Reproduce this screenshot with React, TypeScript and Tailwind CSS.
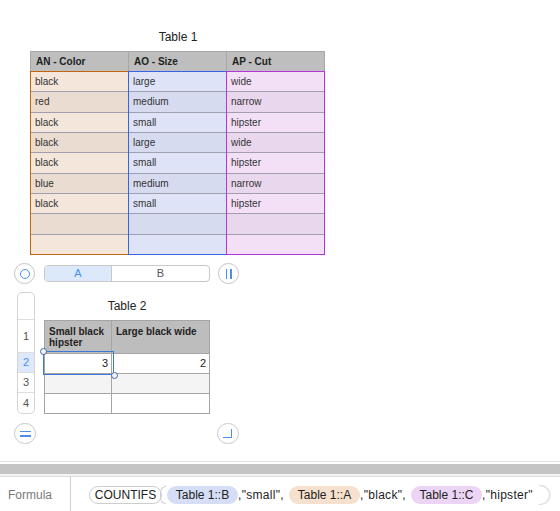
import React from 'react';

type Row = [string, string, string];

const ROWS: Row[] = [
  ['black', 'large', 'wide'],
  ['red', 'medium', 'narrow'],
  ['black', 'small', 'hipster'],
  ['black', 'large', 'wide'],
  ['black', 'small', 'hipster'],
  ['blue', 'medium', 'narrow'],
  ['black', 'small', 'hipster'],
  ['', '', ''],
  ['', '', ''],
];

const COLS = [
  { title: 'AN - Color', border: 'border-[#c2650f]', light: 'bg-[#f4e6da]', dark: 'bg-[#eadcd0]' },
  { title: 'AO - Size', border: 'border-[#3a62e4]', light: 'bg-[#dfe3f8]', dark: 'bg-[#d6dbef]' },
  { title: 'AP - Cut', border: 'border-[#b436d6]', light: 'bg-[#f3e0f7]', dark: 'bg-[#e9d7ed]' },
];

function Table1() {
  return (
    <div className="ml-[30px] w-[296px]">
      <div className="text-center text-[12px] leading-[14px] text-[#222] mb-[7px]">Table 1</div>
      <div className="flex">
        {COLS.map((col, ci) => (
          <div key={col.title} className={`flex flex-col w-[99px] ${ci === 0 ? '' : '-ml-px'}`}>
            <div
              className={`h-[20px] bg-[#bdbebd] border-t border-l border-[#a7a7a7] flex items-center pl-[5px] text-[10px] font-bold text-[#222] ${
                ci === 2 ? 'border-r' : ''
              }`}
            >
              {col.title}
            </div>
            <div className={`h-[184px] border ${col.border} flex flex-col`}>
              {ROWS.map((r, ri) => (
                <div
                  key={ri}
                  className={`flex-1 flex items-center pl-[4px] text-[10px] text-[#333] ${ri % 2 === 0 ? col.light : col.dark} ${
                    ri > 0 ? 'border-t border-[#a09fae]' : ''
                  }`}
                >
                  {r[ci]}
                </div>
              ))}
            </div>
          </div>
        ))}
      </div>
    </div>
  );
}

function Circle({ children }: { children: React.ReactNode }) {
  return (
    <div className="w-[21px] h-[21px] rounded-full border border-[#c9c9c9] bg-white flex items-center justify-center shadow-[0_0_1px_rgba(0,0,0,0.08)]">
      {children}
    </div>
  );
}

function ColumnControls() {
  return (
    <div className="flex items-center mt-[8px] ml-[14px] h-[21px]">
      <Circle>
        <div className="w-[10px] h-[10px] rounded-full border-[1.5px] border-[#4a90e8]" />
      </Circle>
      <div className="ml-[9px] w-[166px] h-[17px] rounded-[4px] border border-[#c8c8c8] flex overflow-hidden text-[11px]">
        <div className="w-[67px] bg-[#dce9fb] border-r border-[#c8c8c8] flex items-center justify-center text-[#4a8ee8]">A</div>
        <div className="flex-1 flex items-center justify-center text-[#555]">B</div>
      </div>
      <div className="ml-[8px]">
        <Circle>
          <div className="flex gap-[3px]">
            <div className="w-[1.5px] h-[10px] bg-[#4a90e8]" />
            <div className="w-[1.5px] h-[10px] bg-[#4a90e8]" />
          </div>
        </Circle>
      </div>
    </div>
  );
}

function Table2Area() {
  return (
    <div className="flex mt-[8px] ml-[17px]">
      <div className="w-[18px] h-[122px] border border-[#d4d4d4] rounded-[5px] flex flex-col overflow-hidden text-[11px] text-[#555] bg-white">
        <div className="h-[27px] border-b border-[#dedede]" />
        <div className="h-[33px] border-b border-[#dedede] flex items-center justify-center">1</div>
        <div className="h-[20px] border-b border-[#dedede] flex items-center justify-center bg-[#dde9fb] text-[#4a8ee8]">2</div>
        <div className="h-[20px] border-b border-[#dedede] flex items-center justify-center">3</div>
        <div className="flex-1 flex items-center justify-center">4</div>
      </div>
      <div className="ml-[9px] w-[166px] flex flex-col">
        <div className="h-[28px] flex items-center justify-center text-[12px] text-[#222]">Table 2</div>
        <div className="relative border border-[#a5a5a5]">
          <div className="flex h-[33px] bg-[#bdbdbd] border-b border-[#a5a5a5] text-[10px] font-bold text-[#222] leading-[11px]">
            <div className="w-[67px] border-r border-[#a5a5a5] pl-[4px] pt-[5px]">Small black hipster</div>
            <div className="flex-1 pl-[4px] pt-[5px]">Large black wide</div>
          </div>
          <div className="flex h-[20px] border-b border-[#a5a5a5] text-[11px] text-[#222]">
            <div className="w-[67px] border-r border-[#a5a5a5] flex items-center justify-end pr-[3px]">3</div>
            <div className="flex-1 flex items-center justify-end pr-[3px]">2</div>
          </div>
          <div className="flex h-[20px] border-b border-[#a5a5a5] bg-[#f4f4f4]">
            <div className="w-[67px] border-r border-[#a5a5a5]" />
            <div className="flex-1" />
          </div>
          <div className="flex h-[19px]">
            <div className="w-[67px] border-r border-[#a5a5a5]" />
            <div className="flex-1" />
          </div>
          <div className="absolute left-[-2px] top-[30px] w-[71px] h-[24px] border border-[#3b78d8] pointer-events-none" />
          <div className="absolute left-[-5px] top-[27px] w-[7px] h-[7px] rounded-full bg-[#eef2fb] border border-[#4a66a8]" />
          <div className="absolute left-[66px] top-[51px] w-[7px] h-[7px] rounded-full bg-[#eef2fb] border border-[#4a66a8]" />
        </div>
      </div>
    </div>
  );
}

function BottomControls() {
  return (
    <div className="flex items-center mt-[9px] ml-[14px]">
      <div className="w-[22px] h-[21px] rounded-full border border-[#c9c9c9] bg-white flex flex-col items-center justify-center gap-[3px]">
        <div className="w-[11px] h-[1.5px] bg-[#4a90e8]" />
        <div className="w-[11px] h-[1.5px] bg-[#4a90e8]" />
      </div>
      <div className="ml-[181px] w-[22px] h-[21px] rounded-full border border-[#c9c9c9] bg-white flex items-center justify-center">
        <div className="w-[9px] h-[9px] border-r-[1.5px] border-b-[1.5px] border-[#4a90e8] -mt-[1px] -ml-[1px]" />
      </div>
    </div>
  );
}

function Pill({ label, bg }: { label: string; bg: string }) {
  return (
    <div className={`w-[71px] h-[18px] rounded-full ${bg} flex items-center justify-center text-[12px] text-[#222] tracking-normal`}>
      {label}
    </div>
  );
}

function FormulaBar() {
  return (
    <div className="mt-auto">
      <div className="h-[3px] border-t border-[#e2e2e2]" />
      <div className="h-[10px] bg-[#c4c4c4]" />
      <div className="h-[3px] border-b border-[#dcdcdc] bg-[#f4f4f4]" />
      <div className="h-[34px] flex items-stretch">
        <div className="w-[71px] border-r border-[#cfcfcf] flex items-center pl-[8px] pt-[1px] text-[12px] text-[#7a7a7a]">Formula</div>
        <div className="flex items-center pl-[18px] pt-[1px] text-[12px] text-[#222] tracking-[0.3px]">
          <div className="w-[73px] h-[18px] rounded-full border border-[#cdcdcd] bg-white flex items-center justify-center text-[12px] tracking-normal">
            COUNTIFS
          </div>
          <div className="w-[6px] h-[18px] -ml-[2px] mr-[1px] rounded-l-full border-l border-y border-[#d0d0d0]" />
          <Pill label="Table 1::B" bg="bg-[#d5def5]" />
          <span className="w-[51px] whitespace-nowrap">,"small",</span>
          <Pill label="Table 1::A" bg="bg-[#f6e1ce]" />
          <span className="w-[51px] whitespace-nowrap">,"black",</span>
          <Pill label="Table 1::C" bg="bg-[#ecd5f4]" />
          <span className="w-[57px] whitespace-nowrap">,"hipster"</span>
          <div className="w-[11px] h-[20px] rounded-r-full border-r border-y border-[#dadada] shadow-[1px_0_1px_rgba(0,0,0,0.08)]" />
        </div>
      </div>
    </div>
  );
}

export default function App() {
  return (
    <div className="w-[560px] h-[511px] bg-white flex flex-col overflow-hidden font-['Liberation_Sans',Arial,sans-serif]">
      <div className="pt-[30px]">
        <Table1 />
        <ColumnControls />
        <Table2Area />
        <BottomControls />
      </div>
      <FormulaBar />
    </div>
  );
}
